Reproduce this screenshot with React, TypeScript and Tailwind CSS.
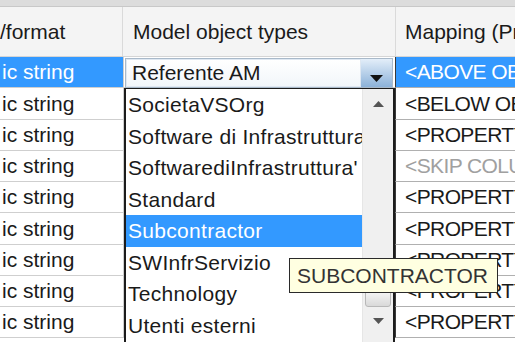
import React from "react";

const mapping = [
  "<ABOVE OBJECT>",
  "<BELOW OBJECT>",
  "<PROPERTY>",
  "<SKIP COLUMN>",
  "<PROPERTY>",
  "<PROPERTY>",
  "<PROPERTY>",
  "<PROPERTY>",
  "<PROPERTY>",
];

const items = [
  "SocietaVSOrg",
  "Software di Infrastruttura",
  "SoftwarediInfrastruttura'",
  "Standard",
  "Subcontractor",
  "SWInfrServizio",
  "Technology",
  "Utenti esterni",
];

export default function App() {
  return (
    <div
      className="relative w-[515px] h-[342px] overflow-hidden bg-white text-[21px] text-[#1a1a1a]"
      style={{ fontFamily: '"Liberation Sans", Arial, sans-serif' }}
    >
      {/* top strip */}
      <div className="h-[7px] bg-[#dcdcdc] border-b border-[#c8c8c8]" />
      {/* header */}
      <div className="flex h-[50px] bg-[#f4f4f4] border-b border-[#d5d5d5]">
        <div className="w-[123px] shrink-0 flex items-center border-r border-[#dadada] whitespace-nowrap">
          /format
        </div>
        <div className="w-[273px] shrink-0 flex items-center pl-[10px] border-r border-[#dadada] whitespace-nowrap">
          Model object types
        </div>
        <div className="flex-1 flex items-center pl-[9px] whitespace-nowrap overflow-hidden">
          Mapping (Pr
        </div>
      </div>
      {/* rows */}
      {mapping.map((m, i) => (
        <div key={i} className="flex h-[31.25px]">
          <div
            className={`w-[123px] shrink-0 flex items-center pl-[2px] border-b border-[#cfcfcf] whitespace-nowrap overflow-hidden ${
              i === 0 ? "bg-[#3399ff] text-white" : ""
            }`}
          >
            ic string
          </div>
          <div className="w-[273px] shrink-0 border-l border-[#cfcfcf] border-r border-r-[#3a3a3a] border-b border-b-[#cfcfcf]" />
          <div
            className={`flex-1 flex items-center pl-[9px] border-b border-[#b0b0b0] whitespace-nowrap overflow-hidden tracking-[-0.6px] ${
              i === 0 ? "bg-[#3399ff] text-white" : i === 3 ? "text-[#a0a0a0]" : ""
            }`}
          >
            {m}
          </div>
        </div>
      ))}

      {/* combo box in the edited cell */}
      <div className="absolute left-[125px] top-[58px] w-[268px] h-[30px] flex border border-[#a9b9c9] bg-white">
        <div className="flex-1 flex items-center pl-[5px] whitespace-nowrap overflow-hidden border border-[#dfe8f2] bg-gradient-to-b from-white to-[#f2f6fa]">
          Referente AM
        </div>
        <div className="w-[31px] flex items-end justify-center pb-[4px] bg-gradient-to-b from-[#e3eef9] to-[#8cb2d9]">
          <svg width="13" height="8" viewBox="0 0 13 8">
            <polygon points="0,0 13,0 6.5,7" fill="#111" />
          </svg>
        </div>
      </div>

      {/* dropdown list */}
      <div className="absolute left-[124px] top-[88px] w-[271px] h-[260px] flex border-2 border-t border-[#1c1c1c] bg-white">
        <div className="flex-1 min-w-0 flex flex-col tracking-[0.3px]">
          {items.map((it, i) => (
            <div
              key={it}
              className={`h-[31.5px] shrink-0 flex items-center pl-[2px] whitespace-nowrap overflow-hidden ${
                i === 4 ? "bg-[#3399ff] text-white" : ""
              }`}
            >
              {it}
            </div>
          ))}
        </div>
        <div className="w-[31px] shrink-0 flex flex-col items-center bg-[#f0f0f0] border-l border-[#e6e6e6]">
          <div className="h-[28px] w-full flex items-center justify-center pt-[2px]">
            <svg width="11" height="6" viewBox="0 0 11 6">
              <polygon points="0,6 11,6 5.5,0" fill="#555" />
            </svg>
          </div>
          <div className="h-[173px] shrink-0" />
          <div className="w-[26px] h-[17px] shrink-0 rounded-[3px] border border-[#b8b8b8] bg-gradient-to-b from-[#f7f7f7] to-[#d9d9d9]" />
          <div className="pt-[11px]">
            <svg width="11" height="6" viewBox="0 0 11 6">
              <polygon points="0,0 11,0 5.5,6" fill="#555" />
            </svg>
          </div>
        </div>
      </div>

      {/* tooltip */}
      <div className="absolute left-[289px] top-[258px] w-[209px] h-[35px] flex items-center pl-[7px] border border-[#2a2a2a] bg-[#ffffe1] text-[21px] text-[#333] whitespace-nowrap">
        SUBCONTRACTOR
      </div>
    </div>
  );
}
